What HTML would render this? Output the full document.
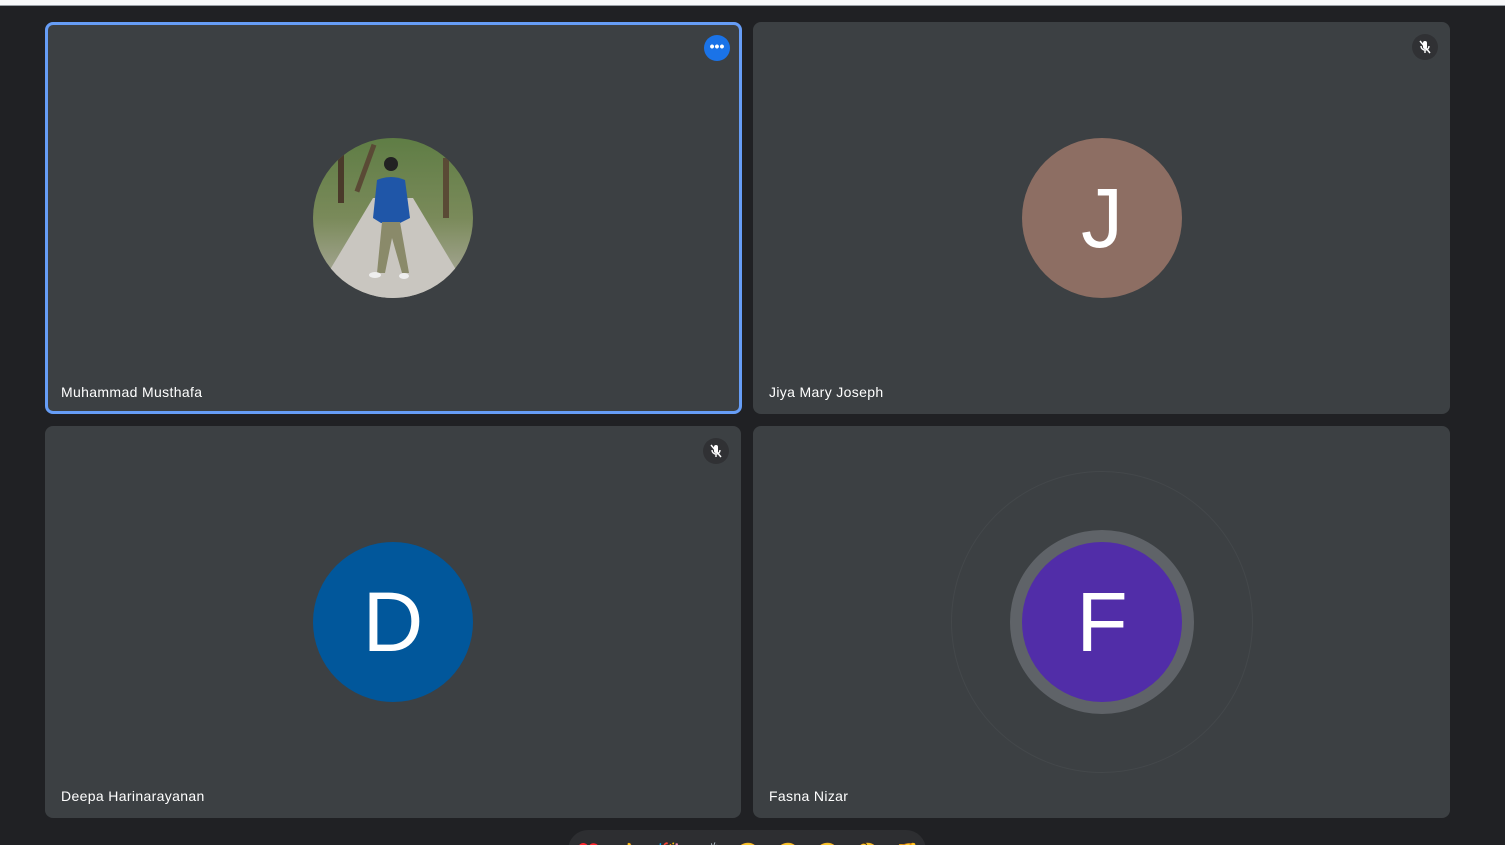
<!DOCTYPE html>
<html style="overflow:hidden"><head><style>
body{margin:0;width:1505px;height:845px;background:#202124;overflow:hidden;position:relative;font-family:"Liberation Sans",sans-serif}
.top{position:absolute;left:0;top:0;width:1505px;height:5px;background:#f8f9fa;border-bottom:1px solid #9aa0a6}
.tile{position:absolute;width:697px;height:392px;background:#3c4043;border-radius:8px;box-sizing:border-box}
.name{position:absolute;left:16px;bottom:14px;color:#fff;font-size:14px;letter-spacing:.35px}
.av{position:absolute;left:269px;top:116px;width:160px;height:160px;border-radius:50%;color:#fff;font-size:84px;text-align:center;line-height:160px}
.mic{position:absolute;right:12px;top:12px;width:26px;height:26px;border-radius:50%;background:#303134}
</style></head><body>
<div class="top"></div>
<div class="tile" style="left:45px;top:22px;border:3px solid #669df6">
  <div style="position:absolute;right:9px;top:10px;width:26px;height:26px;border-radius:50%;background:#1a73e8;color:#fff;font-size:14px;text-align:center;line-height:22px;font-weight:bold">•••</div>
  <svg style="position:absolute;left:265px;top:113px" width="160" height="160" viewBox="0 0 160 160">
    <defs><clipPath id="c"><circle cx="80" cy="80" r="80"/></clipPath>
    <linearGradient id="g" x1="0" y1="0" x2="0" y2="1"><stop offset="0" stop-color="#5f7d45"/><stop offset=".5" stop-color="#7a8a5a"/><stop offset="1" stop-color="#b5b0a8"/></linearGradient></defs>
    <g clip-path="url(#c)">
      <rect width="160" height="160" fill="url(#g)"/>
      <polygon points="60,60 100,60 160,160 0,160" fill="#c9c6c0"/>
      <rect x="25" y="10" width="6" height="55" fill="#4a3a2a"/>
      <rect x="50" y="5" width="5" height="50" fill="#5a4a35" transform="rotate(20 52 30)"/>
      <rect x="130" y="20" width="6" height="60" fill="#5a4a35"/>
      <circle cx="78" cy="26" r="7" fill="#222"/>
      <path d="M64,42 Q78,36 92,42 L97,80 L87,85 L68,85 L60,80 Z" fill="#1f56a8"/>
      <path d="M69,84 L87,84 L96,135 L89,135 L79,100 L72,135 L64,135 Z" fill="#8a8a6a"/>
      <ellipse cx="62" cy="137" rx="6" ry="3" fill="#eee"/><ellipse cx="91" cy="138" rx="5" ry="3" fill="#eee"/>
    </g>
  </svg>
  <div class="name" style="left:13px;bottom:11px">Muhammad Musthafa</div>
</div>
<div class="tile" style="left:753px;top:22px">
  <div class="mic"><svg width="26" height="26" viewBox="0 0 26 26"><rect x="11" y="7" width="4" height="8" rx="2" fill="#fff"/><path d="M9 12a4 4 0 0 0 8 0M13 16v3" stroke="#fff" stroke-width="1.4" fill="none"/><path d="M8 7l10 12" stroke="#fff" stroke-width="1.5"/></svg></div>
  <div class="av" style="background:#8d6e63">J</div>
  <div class="name">Jiya Mary Joseph</div>
</div>
<div class="tile" style="left:45px;top:426px;width:696px">
  <div class="mic"><svg width="26" height="26" viewBox="0 0 26 26"><rect x="11" y="7" width="4" height="8" rx="2" fill="#fff"/><path d="M9 12a4 4 0 0 0 8 0M13 16v3" stroke="#fff" stroke-width="1.4" fill="none"/><path d="M8 7l10 12" stroke="#fff" stroke-width="1.5"/></svg></div>
  <div class="av" style="background:#01579b;left:268px">D</div>
  <div class="name">Deepa Harinarayanan</div>
</div>
<div class="tile" style="left:753px;top:426px">
  <div style="position:absolute;left:198px;top:45px;width:302px;height:302px;border-radius:50%;border:1px solid #44484b;box-sizing:border-box"></div>
  <div style="position:absolute;left:257px;top:104px;width:184px;height:184px;border-radius:50%;background:#5f6368"></div>
  <div class="av" style="background:#512da8">F</div>
  <div class="name">Fasna Nizar</div>
</div>
<div style="position:absolute;left:568px;top:830px;width:358px;height:40px;border-radius:20px;background:#2d2e31;font-size:20px;line-height:30px;letter-spacing:15px;padding-left:8px;padding-top:8px;box-sizing:border-box;white-space:nowrap;font-family:'Noto Color Emoji','DejaVu Sans',sans-serif">
<span style="color:#f06292">♥</span><span style="color:#fdd835">👍🎉👏😂😮😢🤔👎</span></div>
</body></html>
